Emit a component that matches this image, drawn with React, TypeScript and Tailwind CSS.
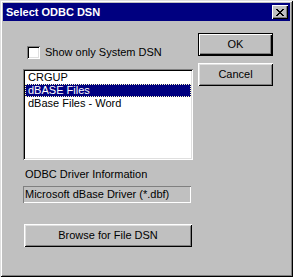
import React from "react";

const font = { fontFamily: '"Liberation Sans", Arial, sans-serif' };

function CloseGlyph() {
  const rows = ["11000011", "01100110", "00111100", "00011000", "00111100", "01100110", "11000011"];
  return (
    <svg width="8" height="7" viewBox="0 0 8 7" shapeRendering="crispEdges">
      {rows.flatMap((r, y) =>
        r.split("").map((c, x) => (c === "1" ? <rect key={`${x}-${y}`} x={x} y={y} width="1" height="1" fill="#000" /> : null))
      )}
    </svg>
  );
}

function Button({ label, def, className }: { label: string; def?: boolean; className: string }) {
  return (
    <div
      className={`flex items-center justify-center bg-[#c0c0c0] text-[11px] leading-[13px] text-black ${
        def
          ? "shadow-[inset_1px_1px_#000,inset_-1px_-1px_#000,inset_2px_2px_#fff,inset_-2px_-2px_#000,inset_-3px_-3px_#808080]"
          : "shadow-[inset_1px_1px_#fff,inset_-1px_-1px_#000,inset_2px_2px_#dfdfdf,inset_-2px_-2px_#808080]"
      } ${className}`}
    >
      {label}
    </div>
  );
}

export default function App() {
  return (
    <div
      style={font}
      className="w-[293px] h-[277px] bg-[#c0c0c0] p-[3px] flex flex-col shadow-[inset_1px_1px_#dfdfdf,inset_-1px_-1px_#000,inset_2px_2px_#fff,inset_-2px_-2px_#808080]"
    >
      <div className="h-[18px] bg-[#000080] flex items-center justify-between pl-[3px] pr-[2px]">
        <span className="text-white font-bold text-[11px] leading-[13px]">Select ODBC DSN</span>
        <div className="w-[16px] h-[14px] bg-[#c0c0c0] flex items-center justify-center shadow-[inset_1px_1px_#fff,inset_-1px_-1px_#000,inset_-2px_-2px_#808080]">
          <CloseGlyph />
        </div>
      </div>
      <div className="flex flex-row items-start pl-[20px]">
        <div className="w-[170px] flex flex-col pt-[25px]">
          <div className="flex flex-row items-center h-[13px] pl-[4px]">
            <div className="w-[13px] h-[13px] bg-white shadow-[inset_1px_1px_#808080,inset_-1px_-1px_#fff,inset_2px_2px_#000,inset_-2px_-2px_#dfdfdf]" />
            <span className="ml-[5px] text-[11px] leading-[13px] text-black">Show only System DSN</span>
          </div>
          <div className="mt-[10px] h-[91px] bg-white p-[2px] shadow-[inset_1px_1px_#808080,inset_-1px_-1px_#fff,inset_2px_2px_#000,inset_-2px_-2px_#dfdfdf]">
            <div className="h-[13px] pl-[3px] text-[11px] leading-[13px] text-black">CRGUP</div>
            <div className="h-[13px] pl-[2px] text-[11px] leading-[11px] text-white bg-[#000080] border border-dotted border-[#ffffc0]">
              dBASE Files
            </div>
            <div className="h-[13px] pl-[3px] text-[11px] leading-[13px] text-black">dBase Files - Word</div>
          </div>
          <div className="mt-[8px] pl-[2px] text-[11px] leading-[13px] text-black">ODBC Driver Information</div>
          <div className="mt-[5px] w-[168px] h-[17px] pl-[2px] flex items-center text-[11px] leading-[13px] text-black shadow-[inset_1px_1px_#808080,inset_-1px_-1px_#fff]">
            Microsoft dBase Driver (*.dbf)
          </div>
          <Button label="Browse for File DSN" className="mt-[21px] ml-[1px] w-[168px] h-[23px]" />
        </div>
        <div className="ml-[5px] w-[75px] flex flex-col pt-[12px]">
          <Button label="OK" def className="h-[23px]" />
          <Button label="Cancel" className="mt-[7px] h-[23px]" />
        </div>
      </div>
    </div>
  );
}
